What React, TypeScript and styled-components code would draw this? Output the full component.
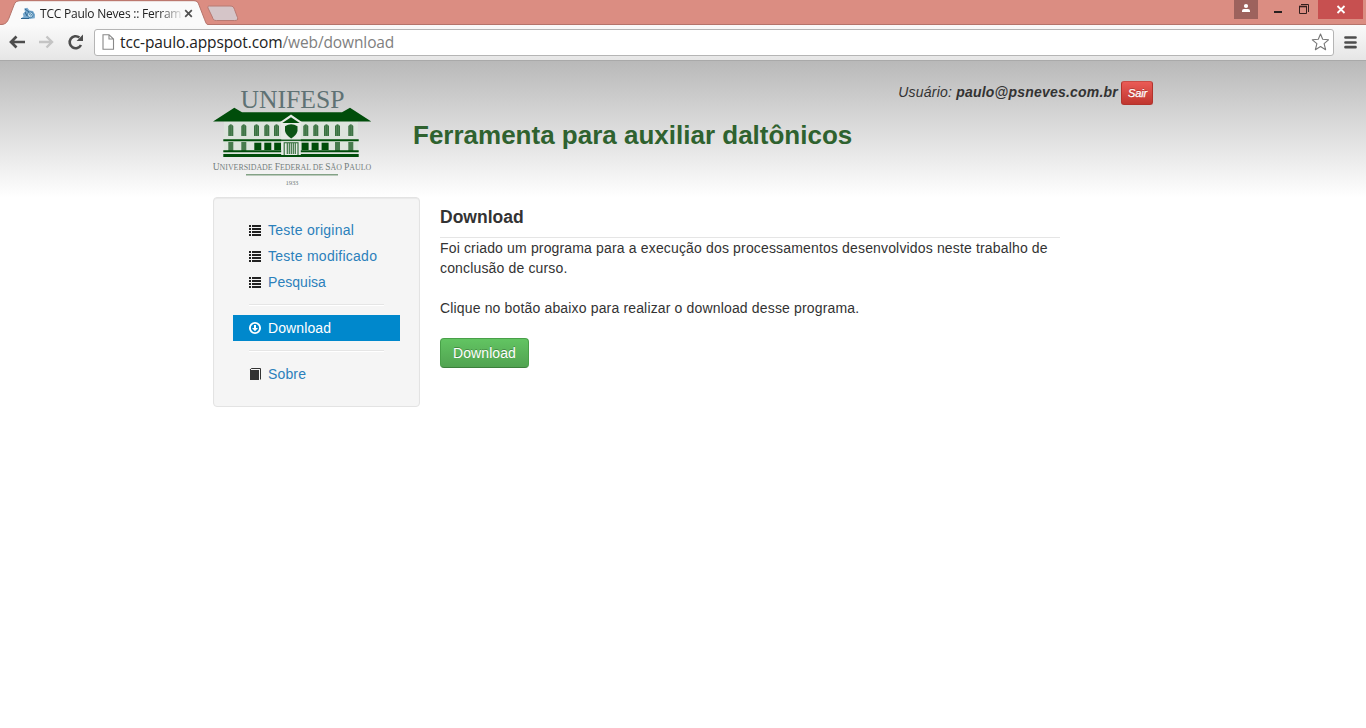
import React from 'react';
import styled, { createGlobalStyle } from 'styled-components';

const Global = createGlobalStyle`
  * { box-sizing: border-box; }
  body {
    margin: 0;
    background: #fff;
    color: #333;
    font: 14px/20px "Liberation Sans", Arial, sans-serif;
    overflow: hidden;
  }
  h1, h2, p, ul { margin: 0; padding: 0; }
  svg { display: block; flex: none; }
`;

/* Browser window */
const TabStrip = styled.div`
  display: flex;
  justify-content: space-between;
  height: 25px;
  background: #db8d82;
  border-bottom: 1px solid #b5746b;
`;
const Tabs = styled.div`
  display: flex;
  height: 25px;
`;
const Tab = styled.div`
  position: relative;
  display: flex;
  align-items: center;
  width: 208px;
  height: 25px;
  padding: 2px 0 0 20px;
`;
const TabShape = styled.svg`
  position: absolute;
  left: 0;
  top: 0;
`;
const TabIcon = styled.svg`
  position: relative;
`;
const TabTitle = styled.span`
  position: relative;
  flex: none;
  width: 144px;
  margin-left: 4px;
  white-space: nowrap;
  color: #222;
  font: 12px/16px "Open Sans", "Noto Sans", sans-serif;
  letter-spacing: -0.22px;
  mask-image: linear-gradient(to right, #000 118px, rgba(0, 0, 0, 0.15) 140px);
`;
const TabClose = styled.svg`
  position: relative;
`;
const NewTab = styled.svg`
  margin: 5px 0 0 -3px;
`;
const WindowButtons = styled.div`
  display: flex;
  padding-right: 3px;
`;
const WindowButton = styled.div<{ $width: number; $color?: string }>`
  display: flex;
  justify-content: center;
  width: ${(p) => p.$width}px;
  height: 19px;
  background: ${(p) => p.$color || 'transparent'};
`;
const Toolbar = styled.div`
  display: flex;
  align-items: center;
  height: 36px;
  padding: 0 8px 1px;
  background: linear-gradient(#fafafa, #e6e6e6);
  border-bottom: 1px solid #a9a9a9;
`;
const NavButtons = styled.div`
  display: flex;
  gap: 11px;
  width: 86px;
`;
const AddressBar = styled.div`
  display: flex;
  align-items: center;
  width: 1240px;
  height: 27px;
  padding: 0 4px 0 7px;
  background: #fff;
  border: 1px solid #b5b5b5;
  border-radius: 3px;
`;
const Url = styled.span`
  flex: 1;
  margin-left: 5px;
  color: #222;
  font: 15.5px/22px "Open Sans", "Noto Sans", sans-serif;
  letter-spacing: -0.11px;
`;
const UrlPath = styled.span`
  color: #808080;
`;
const MenuIcon = styled.svg`
  margin-left: 10px;
`;

/* Web page */
const Page = styled.div`
  height: 667px;
  background: linear-gradient(#b9b9b9, #fff 137px);
`;
const Container = styled.div`
  width: 940px;
  margin: 0 auto;
`;
const Header = styled.header`
  display: flex;
  height: 136px;
`;
const Logo = styled.svg`
  margin-top: 21px;
`;
const SiteTitle = styled.h1`
  margin: 54px 0 0 40px;
  color: #2f622f;
  font-size: 26px;
  line-height: 40px;
  white-space: nowrap;
`;
const UserInfo = styled.div`
  display: flex;
  height: 24px;
  margin: 20px 0 0 auto;
  gap: 3px;
  font-style: italic;
  line-height: 23px;
  white-space: nowrap;
`;
const UserText = styled.span`
  letter-spacing: 0.21px;
`;
const LogoutButton = styled.button`
  width: 32px;
  height: 24px;
  padding: 0 0 0 1px;
  border: 1px solid #b2332d;
  border-top-color: #cb4b45;
  border-radius: 3px;
  background: linear-gradient(#ea5b56, #c0362f);
  color: #fff;
  font: italic 11px/20px "Liberation Sans", Arial, sans-serif;
  letter-spacing: -0.2px;
  -webkit-text-stroke: 0.25px #fff;
  text-shadow: 0 -1px 0 rgba(0, 0, 0, 0.25);
`;
const Columns = styled.div`
  display: flex;
  align-items: flex-start;
  gap: 20px;
`;
const Sidebar = styled.nav`
  width: 207px;
  height: 210px;
  padding: 19px;
  background: #f5f5f5;
  border: 1px solid #e3e3e3;
  border-radius: 4px;
  box-shadow: inset 0 1px 1px rgba(0, 0, 0, 0.05);
`;
const Divider = styled.div`
  height: 2px;
  margin: 9px 16px;
  background: #e5e5e5;
  border-bottom: 1px solid #fff;
`;
const Item = styled.a<{ $active?: boolean; $tracking?: number }>`
  display: flex;
  align-items: center;
  gap: 6px;
  height: 26px;
  padding-left: 15px;
  background: ${(p) => (p.$active ? '#0088cc' : 'transparent')};
  color: ${(p) => (p.$active ? '#fff' : '#2b80bb')};
  letter-spacing: ${(p) => p.$tracking || 0}px;
  text-decoration: none;
`;
const Content = styled.main`
  width: 620px;
`;
const SectionTitle = styled.h2`
  height: 41px;
  border-bottom: 1px solid #e5e5e5;
  font-size: 17.5px;
  line-height: 40px;
`;
const Paragraph = styled.p`
  margin-bottom: 20px;
  letter-spacing: 0.157px;
`;
const DownloadButton = styled.button`
  width: 89px;
  height: 30px;
  padding: 0;
  border: 1px solid #48a048;
  border-bottom-color: #3c803c;
  border-radius: 4px;
  background: linear-gradient(#62c462, #51a351);
  color: #fff;
  font: 14px/20px "Liberation Sans", Arial, sans-serif;
  letter-spacing: 0.08px;
  text-shadow: 0 -1px 0 rgba(0, 0, 0, 0.25);
`;

const leftWindows = [228.3, 241.3, 254, 264.3, 274];
const rightWindows = [303.3, 313.3, 324, 335, 348.3];
const darkPanes = [254.3, 264.3, 274.2, 301.6, 311.6, 321.6];

const UnifespLogo = () => (
  <Logo width="160" height="106" viewBox="213 82 160 106">
    <text x="240.5" y="108.3" textLength="104" fontFamily="Liberation Serif, serif" fontSize="26" fill="#5f7274" lengthAdjust="spacingAndGlyphs">UNIFESP</text>
    <rect x="224" y="121" width="134" height="34" fill="#dde4dd" />
    <path d="M213 121.6 234.3 107.8 242 112.2H342L350 107.8 371.300 121.6Z" fill="#004d0a" />
    {[...leftWindows, ...rightWindows].map((x) => (
      <g key={x}>
        <path d={`M${x} 136V126q2.5-3.500 5 0v10z`} fill="#38703f" />
        <path d={`M${x + 1.6} 125v11M${x + 3.4} 125v11`} stroke="#82a487" strokeWidth="0.4" />
      </g>
    ))}
    {[228.3, 241.3, 335, 348.3].map((x) => (
      <rect key={x} x={x} y="142" width="5" height="9" fill="#487b4e" />
    ))}
    {darkPanes.map((x) => (
      <rect key={x} x={x} y="142.700" width="7" height="7.300" fill="#004d0a" />
    ))}
    <path d="M223.3 140.3H358.7M223.3 151.3H358.7" stroke="#004d0a" strokeWidth="1.9" />
    <path d="M223.3 155.5H358.7" stroke="#004d0a" strokeWidth="2.8" />
    <path d="M278 123.5 291 114.5 304 123.5H300.8V155H281.2V123.5Z" fill="#e6eae6" />
    <path d="M282.3 122.9 291 117.2 299.7 122.9Z" fill="#004d0a" />
    <path d="M285 126.2Q291 122.5 297.5 126.2V131Q296.5 135.5 291.2 138.4Q286 135.5 285 131Z" fill="#0c5416" />
    <path d="M281 140.3H301" stroke="#1a5d24" strokeWidth="1.6" />
    <path d="M284.2 155V142.7H298V155" fill="none" stroke="#2d6935" strokeWidth="1.1" />
    <path d="M287.3 154V143M289.3 154V143M291.3 154V143M293.3 154V143M295.3 154V143" stroke="#3c7443" strokeWidth="1.2" />
    <path d="M280 156H302" stroke="#004d0a" strokeWidth="2" />
    <g fill="#747d7c" fontFamily="Liberation Serif, serif">
      <text x="212.700" y="169.500" fontSize="8" textLength="158.500" lengthAdjust="spacingAndGlyphs">
        <tspan fontSize="9.700">U</tspan>NIVERSIDADE <tspan fontSize="9.700">F</tspan>EDERAL DE <tspan fontSize="9.700">S</tspan>ÃO <tspan fontSize="9.700">P</tspan>AULO
      </text>
      <text x="285.500" y="184.800" fontSize="6.800" textLength="13">1933</text>
    </g>
    <path d="M246 174.700H338" stroke="#83a286" strokeWidth="1.400" />
  </Logo>
);

const ListIcon = () => (
  <svg width="14" height="14" viewBox="0 0 14 14" fill="#222" shapeRendering="crispEdges">
    {[2, 5, 8, 11].map((y) => (
      <g key={y}>
        <rect x="1" y={y} width="2" height="2" />
        <rect x="4" y={y} width="9" height="2" />
      </g>
    ))}
  </svg>
);

export default function App() {
  return (
    <>
      <Global />
      <TabStrip>
        <Tabs>
          <Tab>
            <TabShape width="208" height="25" viewBox="0 0 208 25">
              <path d="M0 25C5 25 7 23 9 18L14 5C15 2 17 1 20 1H194C197 1 198 2 199 5L204 18C206 23 206 24 208 25Z" fill="#fafafa" />
              <path d="M0 24.5C5 24.5 7 23 9 18L14 5C15 2 17 .7 20 .7H194C197 .7 198 2 199 5L204 18C206 23 206 24 208 24.5" fill="none" stroke="#b5746b" />
            </TabShape>
            <TabIcon width="16" height="16" viewBox="0 0 16 16">
              <path d="M.8 12.700 3.500 10.500 2.800 7.800 5 6 4.200 2.500 7.300 1.800 9.500 4.500 13 5 15 8.500 14.800 12.300 9 13Z" fill="#78a9ce" />
              <path d="M1 12.500H9M5 6 7 10M5 3 9 6" stroke="#2c638f" fill="none" />
              <circle cx="10.300" cy="8.800" r="2.900" fill="#c2deed" stroke="#417ba7" />
              <path d="m9 8.500 1.300-1 1.300 1.400-1.300 1.200" stroke="#39739d" fill="none" />
            </TabIcon>
            <TabTitle>TCC Paulo Neves :: Ferram</TabTitle>
            <TabClose width="9" height="9" viewBox="0 0 9 9"><path d="m1.200 1.200 6.600 6.600M7.800 1.200 1.200 7.800" stroke="#505050" strokeWidth="1.700" /></TabClose>
          </Tab>
          <NewTab width="34" height="17" viewBox="0 0 34 17"><path d="M4.500 1H25C28 1 28.700 2 29.500 4.500L32.500 12.500C33.300 15 32 15.500 29.500 15.500H11.500C9 15.500 8.300 15 7.300 12L3 3C2.500 1.500 3 1 4.500 1Z" fill="#d5c5c8" stroke="#b77a73" /></NewTab>
        </Tabs>
        <WindowButtons>
          <WindowButton $width={24} $color="#9d625d"><svg width="24" height="19"><circle cx="12" cy="6" r="2.100" fill="#fff" /><path d="M8 12V10.800Q8 9 10 9H14Q16 9 16 10.800V12Z" fill="#fff" /></svg></WindowButton>
          <WindowButton $width={33}><svg width="33" height="19"><path d="M16 12H24" stroke="#27201f" strokeWidth="2" /></svg></WindowButton>
          <WindowButton $width={27}><svg width="27" height="19"><path d="M8.500 6.500H15.500V13.500H8.500ZM10 4.500H17.500V12" fill="none" stroke="#34201e" /><path d="M8 6.500H16" stroke="#34201e" strokeWidth="1.600" /></svg></WindowButton>
          <WindowButton $width={45} $color="#c75050"><svg width="45" height="19"><path d="m19.500 6 7 7M26.500 6l-7 7" stroke="#fff" strokeWidth="1.800" /></svg></WindowButton>
        </WindowButtons>
      </TabStrip>
      <Toolbar>
        <NavButtons>
          <svg width="18" height="18" viewBox="0 0 18 18"><path d="M17 9H3M8.500 3.500 3 9l5.500 5.500" fill="none" stroke="#4d4d4d" strokeWidth="2.700" /></svg>
          <svg width="18" height="18" viewBox="0 0 18 18"><path d="M2 9H14M9.500 3.500 15 9l-5.500 5.500" fill="none" stroke="#c4c4c4" strokeWidth="2.400" /></svg>
          <svg width="18" height="18" viewBox="0 0 18 18"><path d="M15 12A6 6 0 1 1 13.400 4.500" fill="none" stroke="#4d4d4d" strokeWidth="2.600" /><path d="M17 1.500V8H10.600Z" fill="#4d4d4d" /></svg>
        </NavButtons>
        <AddressBar>
          <svg width="13" height="16" viewBox="0 0 13 16"><path d="M1 .7H7L11.500 5V15.300H1ZM7 .7V5H11.500" fill="#fff" stroke="#888" strokeWidth="1.100" /></svg>
          <Url>tcc-paulo.appspot.com<UrlPath>/web/download</UrlPath></Url>
          <svg width="18" height="18" viewBox="0 0 18 18"><path d="m9.500 1 2.200 5.300 5.800 .5-4.400 3.900 1.500 6-5.100-3.200-5.100 3.200 1.500-6-4.600-3.900 6-.5Z" fill="#fff" stroke="#777" strokeWidth="1.100" strokeLinejoin="round" /></svg>
        </AddressBar>
        <MenuIcon width="13" height="14" viewBox="0 0 13 14"><path d="M1.500 2.500H11.500M1.500 7.500H11.500M1.500 12.200H11.500" stroke="#4d4d4d" strokeWidth="2.700" strokeLinecap="round" /></MenuIcon>
      </Toolbar>
      <Page>
        <Container>
          <Header>
            <UnifespLogo />
            <SiteTitle>Ferramenta para auxiliar daltônicos</SiteTitle>
            <UserInfo><UserText>Usuário: <b>paulo@psneves.com.br</b></UserText><LogoutButton>Sair</LogoutButton></UserInfo>
          </Header>
          <Columns>
            <Sidebar>
              <Item $tracking={0.26}><ListIcon />Teste original</Item>
              <Item $tracking={0.26}><ListIcon />Teste modificado</Item>
              <Item $tracking={0.04}><ListIcon />Pesquisa</Item>
              <Divider />
              <Item $active $tracking={0.1}><svg width="14" height="14" viewBox="0 0 14 14"><circle cx="7" cy="7" r="5.100" fill="none" stroke="#fff" strokeWidth="1.900" /><path d="M6 4H8V7H10L7 10.200 4 7H6Z" fill="#fff" /></svg>Download</Item>
              <Divider />
              <Item $tracking={0.15}><svg width="14" height="14" viewBox="0 0 14 14"><path d="M2 3H11V13H2Z" fill="#333" /><path d="M2 3 3.300 1.500H12.500V12.500" fill="none" stroke="#333" /></svg>Sobre</Item>
            </Sidebar>
            <Content>
              <SectionTitle>Download</SectionTitle>
              <Paragraph>Foi criado um programa para a execução dos processamentos desenvolvidos neste trabalho de conclusão de curso.</Paragraph>
              <Paragraph>Clique no botão abaixo para realizar o download desse programa.</Paragraph>
              <DownloadButton>Download</DownloadButton>
            </Content>
          </Columns>
        </Container>
      </Page>
    </>
  );
}
